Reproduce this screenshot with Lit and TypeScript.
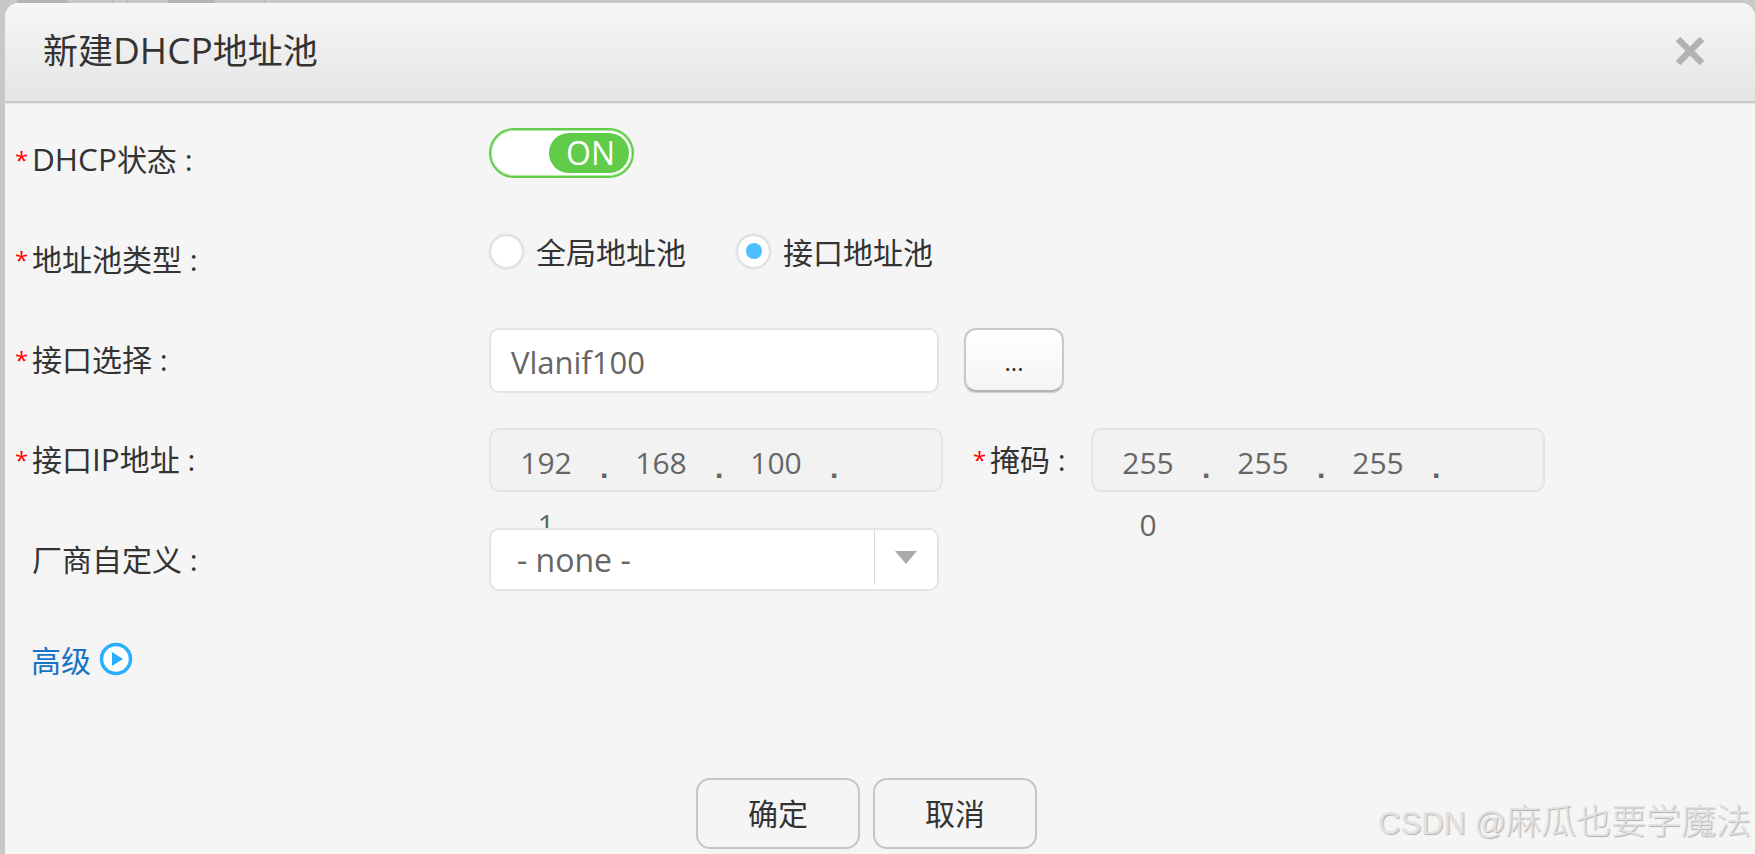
import { LitElement, css, html } from 'lit';
import { customElement } from 'lit/decorators.js';

@customElement('app-root')
export class AppRoot extends LitElement {
  static override styles = css`
    :host {
      display: block;
      height: 854px;
      overflow: hidden;
      box-sizing: border-box;
      padding: 3px 0 0 5px;
      background:
        linear-gradient(90deg, transparent 17px, #b4b4b4 17px, #b4b4b4 68px, transparent 68px,
          transparent 112px, #b4b4b4 112px, #b4b4b4 113px, transparent 113px,
          transparent 127px, #b4b4b4 127px, #b4b4b4 128px, transparent 128px,
          transparent 168px, #b4b4b4 168px, #b4b4b4 215px, transparent 215px,
          transparent 264px, #b4b4b4 264px, #b4b4b4 265px, transparent 265px) top left / 100% 3px no-repeat,
        #c8c8c8;
      font-family: 'Open Sans', 'Noto Sans CJK SC', sans-serif;
      color: #333;
    }
    .dialog {
      position: relative;
      height: 851px;
      background: #f5f5f5;
      border-radius: 14px 14px 0 0;
    }
    .header {
      display: flex;
      align-items: center;
      justify-content: space-between;
      box-sizing: border-box;
      height: 100px;
      padding: 0 50px 3px 38px;
      background: linear-gradient(#f6f6f6, #e5e5e5);
      border-radius: 14px 14px 0 0;
      border-bottom: 2px solid #c9c9c9;
      box-shadow: 0 1px 0 #e8e8e8;
    }
    .title {
      font-size: 35px;
      line-height: 44px;
    }
    .title .lat {
      font-size: 37px;
    }
    .body {
      padding: 25px 0 0 10px;
    }
    .row {
      display: flex;
      height: 100px;
    }
    .label {
      display: flex;
      width: 474px;
      flex: none;
      font-size: 30px;
      line-height: 64px;
      white-space: pre;
    }
    .lat {
      font-size: 31.5px;
      line-height: 1;
    }
    .star {
      width: 17px;
      color: #f00;
      font-size: 24px;
    }
    .switch {
      display: flex;
      justify-content: flex-end;
      box-sizing: border-box;
      width: 145px;
      height: 50px;
      padding: 3px;
      background: #fff;
      border: 2px solid #62cc4c;
      border-radius: 25px;
      box-shadow: inset 0 0 0 1px #b4e8a8;
    }
    .knob {
      box-sizing: border-box;
      width: 80px;
      padding-left: 3px;
      border-radius: 20px;
      background: #60cc4a;
      color: #fff;
      font-size: 32px;
      line-height: 40px;
      text-align: center;
    }
    .radios {
      display: flex;
      align-items: center;
      height: 46px;
      font-size: 30px;
    }
    .radio {
      display: flex;
      align-items: center;
      justify-content: center;
      box-sizing: border-box;
      width: 33px;
      height: 33px;
      margin: 0 13px 0 1px;
      border-radius: 50%;
      background: #fff;
      border: 1px solid #e2e2e2;
      box-shadow: 0 0 3px #bdbdbd;
    }
    .radio.on::after {
      content: '';
      width: 16px;
      height: 16px;
      border-radius: 50%;
      background: #4dbfff;
    }
    .choice {
      display: flex;
      align-items: center;
      width: 247px;
    }
    .field {
      box-sizing: border-box;
      width: 450px;
      height: 65px;
      border: 2px solid #e4e4e4;
      border-radius: 10px;
      background: #fff;
      color: #666;
      font-size: 31px;
      line-height: 65px;
      padding-left: 20px;
    }
    .pick {
      box-sizing: border-box;
      width: 100px;
      height: 64px;
      margin-left: 25px;
      border: 2px solid #c8c8c8;
      border-bottom-color: #b4b4b4;
      border-radius: 12px;
      background: linear-gradient(#fff, #f4f4f4);
      font: 24px/64px 'Open Sans', sans-serif;
      color: #333;
      text-align: center;
      box-shadow: 0 1px 1px #ccc;
    }
    .ip {
      display: flex;
      flex-wrap: wrap;
      align-content: flex-start;
      box-sizing: border-box;
      width: 454px;
      height: 64px;
      padding-left: 29px;
      border: 2px solid #e4e4e4;
      border-radius: 10px;
      background: #f2f2f2;
      color: #666;
      font-size: 30px;
      line-height: 65px;
    }
    .octet {
      display: flex;
      width: 115px;
      height: 62px;
    }
    .num {
      width: 52px;
      text-align: center;
    }
    .dot {
      margin: 5px 0 0 28px;
      font-family: 'Liberation Sans', sans-serif;
      font-size: 30px;
      font-weight: 700;
      color: #666;
    }
    .mask-label {
      display: flex;
      width: 118px;
      margin-left: 30px;
      font-size: 30px;
      line-height: 64px;
      white-space: pre;
    }
    .select {
      position: relative;
      display: flex;
      box-sizing: border-box;
      width: 450px;
      height: 63px;
      border: 2px solid #e4e4e4;
      border-radius: 10px;
      background: #fff;
      color: #666;
      font-size: 32px;
      line-height: 59px;
    }
    .select-text {
      width: 384px;
      padding-left: 26px;
      box-sizing: border-box;
      border-right: 1px solid #d8d8d8;
      margin-bottom: 4px;
    }
    .arrow {
      width: 0;
      height: 0;
      margin: 21px 0 0 20px;
      border-left: 11px solid transparent;
      border-right: 11px solid transparent;
      border-top: 13px solid #aaa;
    }
    .advanced {
      display: flex;
      align-items: center;
      gap: 8px;
      height: 61px;
      padding-left: 16px;
      margin-bottom: 89px;
      color: #1a72c4;
      font-size: 30px;
    }
    .footer {
      display: flex;
      gap: 13px;
      padding-left: 681px;
    }
    .btn {
      box-sizing: border-box;
      width: 164px;
      height: 71px;
      border: 2px solid #c6c6c6;
      border-radius: 14px;
      font-size: 30px;
      line-height: 67px;
      text-align: center;
    }
    .watermark {
      position: absolute;
      right: 4px;
      bottom: 8px;
      font-family: 'Liberation Sans', 'Noto Sans CJK SC', sans-serif;
      font-size: 35px;
      font-weight: 300;
      line-height: 44px;
      color: #e2e2e2;
      text-shadow: 1px 1px 1px #b0b0b0;
      white-space: pre;
    }
    .watermark span {
      font-size: 31px;
    }
  `;

  octets(values: string[]) {
    return values.map((v, i) => html`<div class="octet">
      <span class="num">${v}</span>${i < 3 ? html`<span class="dot">.</span>` : ''}
    </div>`);
  }

  override render() {
    return html`<div class="dialog">
      <div class="header">
        <div class="title">新建<span class="lat">DHCP</span>地址池</div>
        <svg width="30" height="30" viewBox="0 0 30 30">
          <path d="M3 3 L27 27 M27 3 L3 27" stroke="#b2b2b2" stroke-width="6.5" fill="none" />
        </svg>
      </div>
      <div class="body">
        <div class="row">
          <div class="label"><span class="star">*</span><span><span class="lat">DHCP</span>状态 :</span></div>
          <div class="switch"><div class="knob">ON</div></div>
        </div>
        <div class="row">
          <div class="label"><span class="star">*</span>地址池类型 :</div>
          <div class="radios">
            <div class="choice"><span class="radio"></span>全局地址池</div>
            <div class="choice"><span class="radio on"></span>接口地址池</div>
          </div>
        </div>
        <div class="row">
          <div class="label"><span class="star">*</span>接口选择 :</div>
          <div class="field">Vlanif100</div>
          <div class="pick">...</div>
        </div>
        <div class="row">
          <div class="label"><span class="star">*</span><span>接口<span class="lat">IP</span>地址 :</span></div>
          <div class="ip">${this.octets(['192', '168', '100', '1'])}</div>
          <div class="mask-label"><span class="star">*</span>掩码 :</div>
          <div class="ip">${this.octets(['255', '255', '255', '0'])}</div>
        </div>
        <div class="row">
          <div class="label"><span class="star"></span>厂商自定义 :</div>
          <div class="select">
            <div class="select-text">- none -</div>
            <div class="arrow"></div>
          </div>
        </div>
        <div class="advanced">
          高级
          <svg width="34" height="34" viewBox="0 0 34 34">
            <circle cx="17" cy="17" r="14.5" fill="#fff" stroke="#2aaeff" stroke-width="3.5" />
            <path d="M13 10 L24 17 L13 24 Z" fill="#2aaeff" />
          </svg>
        </div>
        <div class="footer">
          <div class="btn">确定</div>
          <div class="btn">取消</div>
        </div>
      </div>
      <div class="watermark"><span>CSDN @</span>麻瓜也要学魔法</div>
    </div>`;
  }
}
